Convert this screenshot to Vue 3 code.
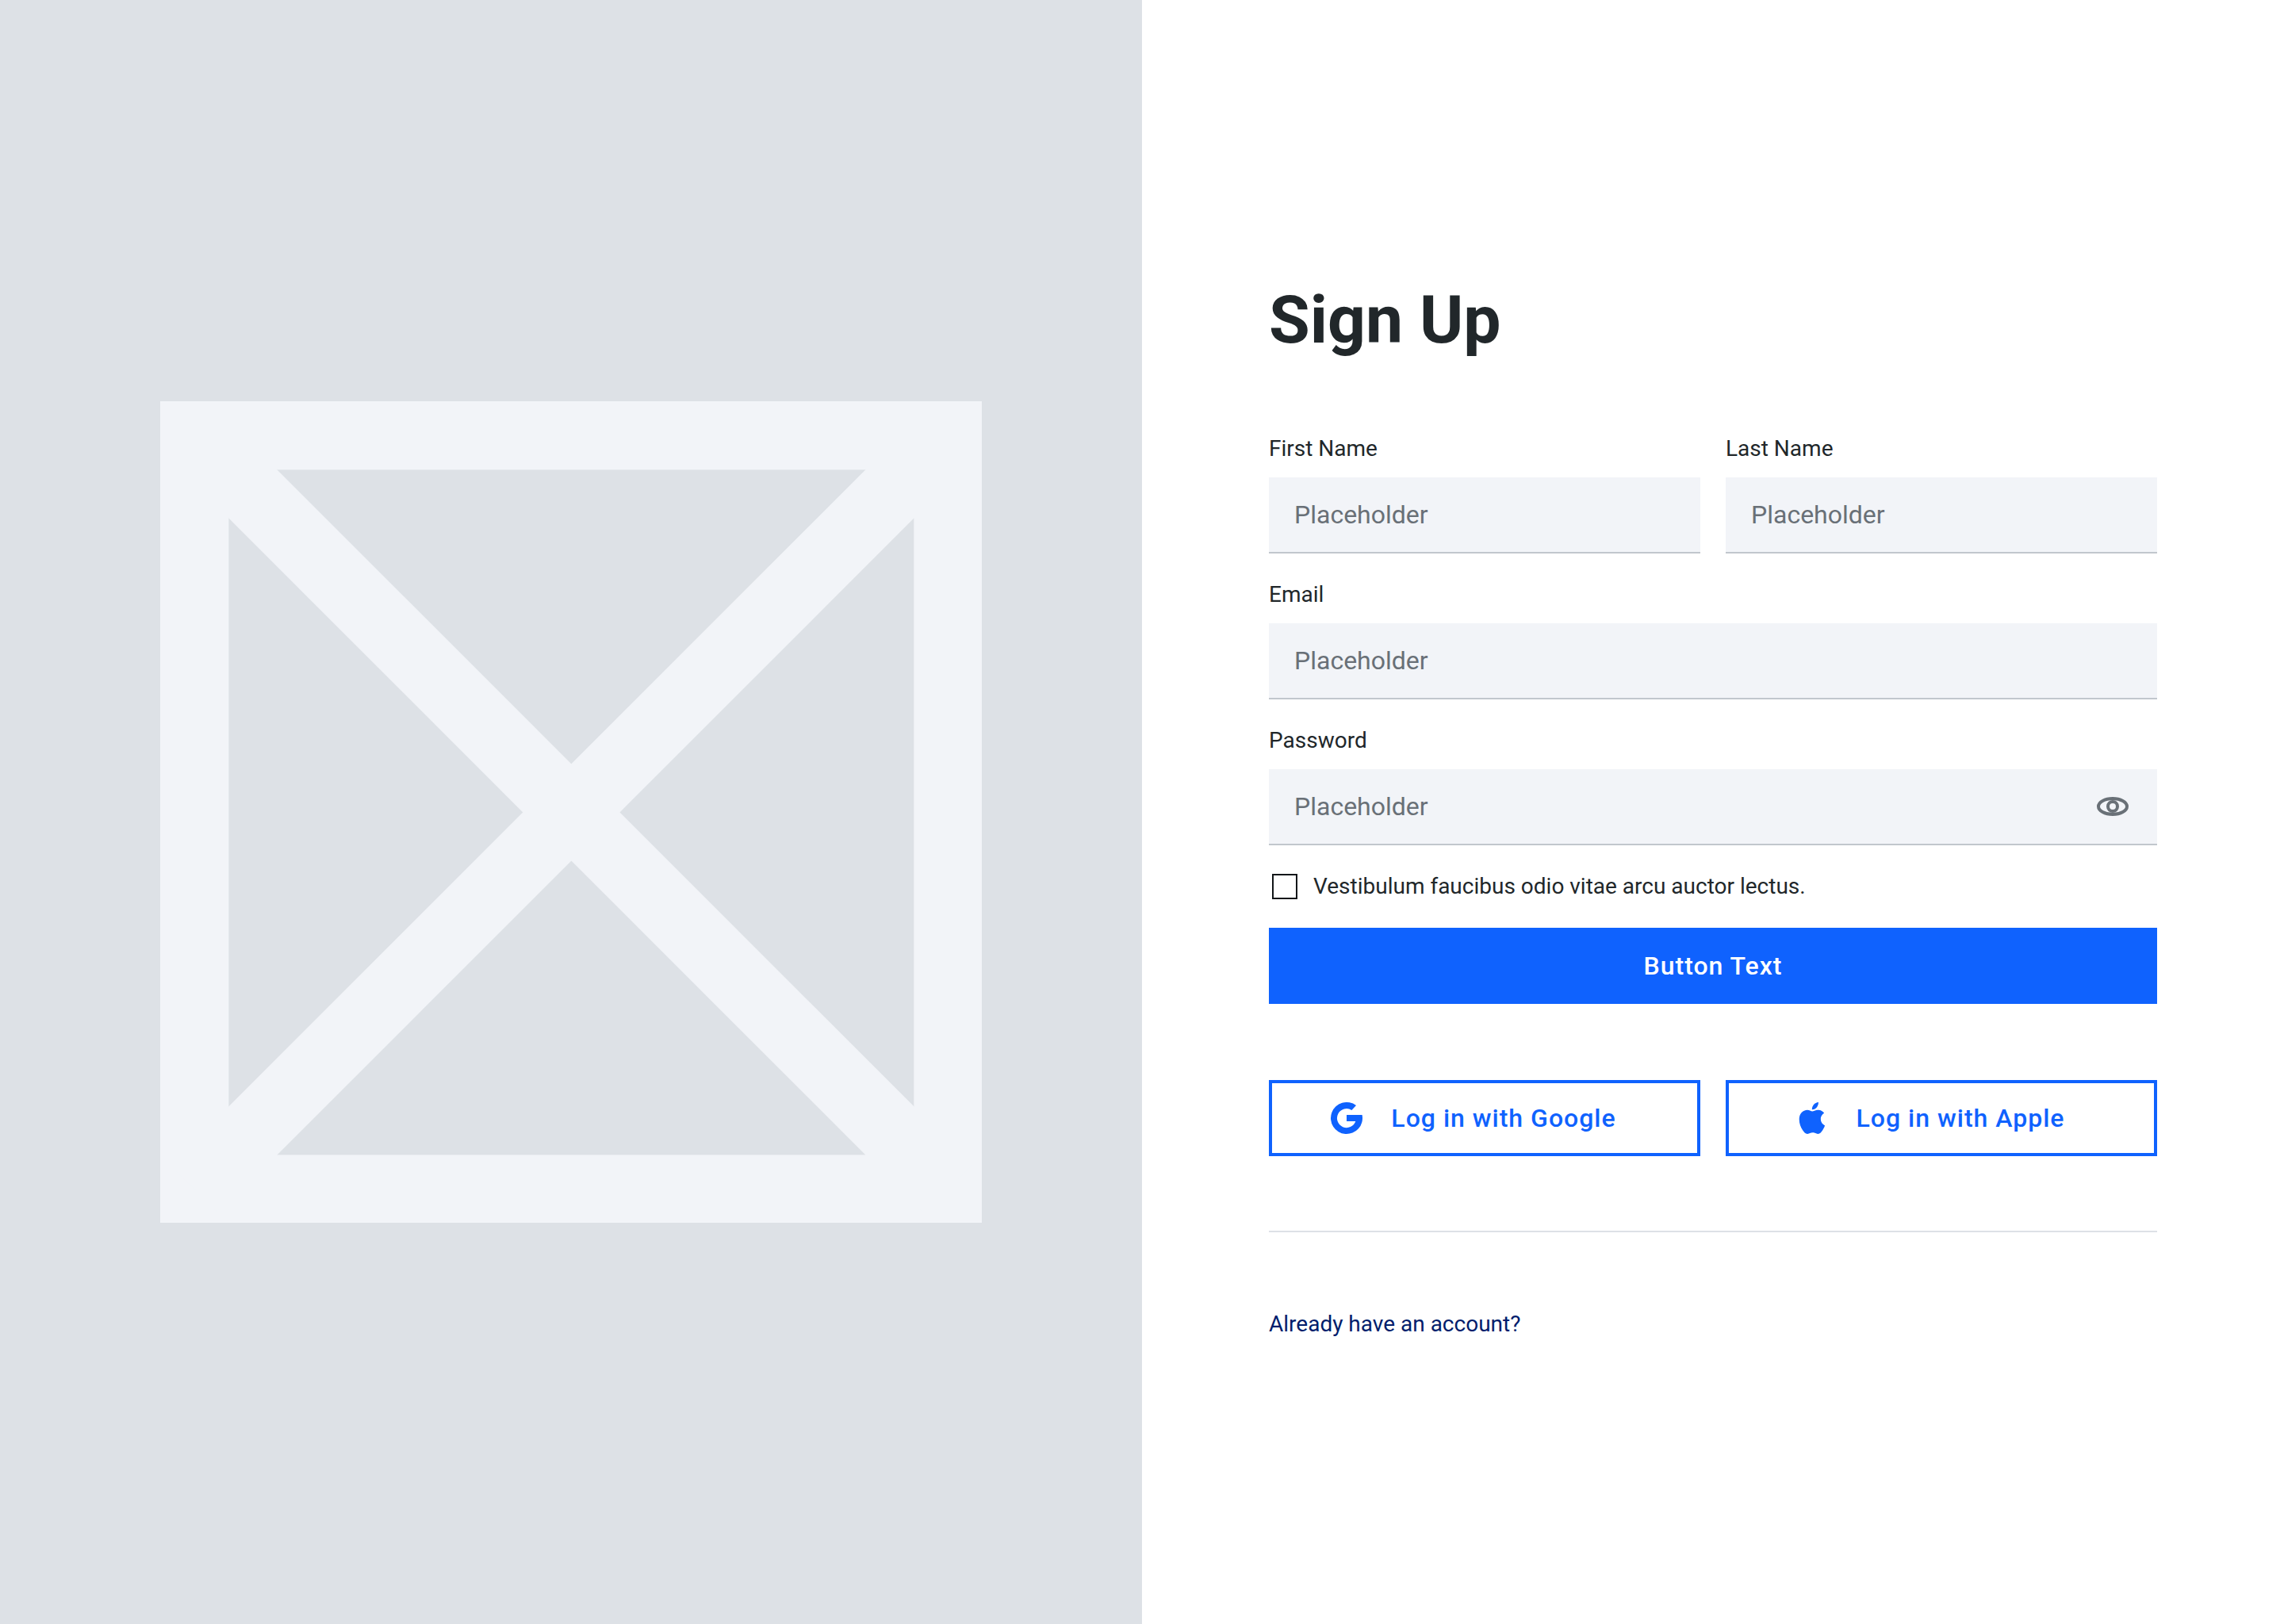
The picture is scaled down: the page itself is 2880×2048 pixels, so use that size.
<script setup>
import { ref } from 'vue'

const firstName = ref('')
const lastName = ref('')
const email = ref('')
const password = ref('')
const accepted = ref(false)
const passwordVisible = ref(false)
</script>

<template>
  <main class="page">
    <section class="media">
      <svg class="media-picture" viewBox="0 0 24 24" fill="none" stroke="currentColor" stroke-width="2" role="img" aria-label="Image placeholder">
        <rect x="1" y="1" width="22" height="22" />
        <path d="M1 1 23 23M23 1 1 23" />
      </svg>
    </section>

    <section class="panel">
      <h1 class="title">Sign Up</h1>

      <form class="form" @submit.prevent>
        <div class="row">
          <div class="field">
            <label for="first-name">First Name</label>
            <input id="first-name" v-model="firstName" class="input" type="text" placeholder="Placeholder" />
          </div>
          <div class="field">
            <label for="last-name">Last Name</label>
            <input id="last-name" v-model="lastName" class="input" type="text" placeholder="Placeholder" />
          </div>
        </div>

        <div class="field">
          <label for="email">Email</label>
          <input id="email" v-model="email" class="input" type="email" placeholder="Placeholder" />
        </div>

        <div class="field">
          <label for="password">Password</label>
          <div class="input input-group">
            <input
              id="password"
              v-model="password"
              class="bare"
              :type="passwordVisible ? 'text' : 'password'"
              placeholder="Placeholder"
            />
            <button class="reveal" type="button" aria-label="Show password" @click="passwordVisible = !passwordVisible">
              <svg class="icon" viewBox="0 0 24 24" fill="none" stroke="currentColor" stroke-width="2">
                <ellipse cx="12" cy="12" rx="9" ry="5" />
                <circle cx="12" cy="12" r="3" />
              </svg>
            </button>
          </div>
        </div>

        <div class="consent">
          <input id="consent" v-model="accepted" class="checkbox" type="checkbox" />
          <label for="consent">Vestibulum faucibus odio vitae arcu auctor lectus.</label>
        </div>

        <button class="button primary" type="submit">Button Text</button>
      </form>

      <div class="row">
        <button class="button outline" type="button">
          <svg class="icon" viewBox="0 0 24 24" fill="currentColor" aria-hidden="true">
            <path d="M18 4A10 10 0 1 0 21.8 10H12V14H17.66A6 6 0 1 1 15.2 7Z" />
          </svg>
          <span>Log in with Google</span>
        </button>
        <button class="button outline" type="button">
          <svg class="icon" viewBox="0 0 24 24" fill="currentColor" aria-hidden="true">
            <path d="M18.71 19.5C17.88 20.74 17 21.95 15.66 21.97C14.32 22 13.89 21.18 12.37 21.18C10.84 21.18 10.37 21.95 9.1 22C7.79 22.05 6.8 20.68 5.96 19.47C4.25 17 2.94 12.45 4.7 9.39C5.57 7.87 7.13 6.91 8.82 6.88C10.1 6.86 11.32 7.75 12.11 7.75C12.89 7.75 14.37 6.68 15.92 6.84C16.57 6.87 18.39 7.1 19.56 8.82C19.47 8.88 17.39 10.1 17.41 12.63C17.44 15.65 20.06 16.66 20.09 16.67C20.06 16.74 19.67 18.11 18.71 19.5M13 3.5C13.73 2.67 14.94 2.04 15.94 2C16.07 3.17 15.6 4.35 14.9 5.19C14.21 6.04 13.07 6.7 11.95 6.61C11.8 5.46 12.36 4.26 13 3.5Z" />
          </svg>
          <span>Log in with Apple</span>
        </button>
      </div>

      <hr class="divider" />

      <a class="link" href="#login">Already have an account?</a>
    </section>
  </main>
</template>

<style>
body {
  margin: 0;
  background: #ffffff;
}
</style>

<style scoped>
.page {
  display: grid;
  grid-template-columns: 1fr 1fr;
  min-height: 100vh;
  color: #21272a;
  font-family: Roboto, 'Liberation Sans', sans-serif;
  font-size: 28px;
  line-height: 40px;
}

.page *,
.page {
  box-sizing: border-box;
}

.media {
  display: flex;
  align-items: center;
  justify-content: center;
  background: #dde1e6;
}

.media-picture {
  display: block;
  width: 72%;
  color: #f2f4f8;
}

.panel {
  display: flex;
  flex-direction: column;
  justify-content: center;
  gap: 96px;
  padding: 96px 160px;
}

.title {
  margin: 0;
  font-size: 84px;
  font-weight: 700;
  line-height: 92px;
}

.form {
  display: flex;
  flex-direction: column;
  gap: 32px;
}

.row {
  display: grid;
  grid-template-columns: 1fr 1fr;
  gap: 32px;
}

.field {
  display: flex;
  flex-direction: column;
  gap: 16px;
}

.input {
  width: 100%;
  height: 96px;
  padding: 0 32px;
  border: 0;
  border-bottom: 2px solid #c1c7cd;
  border-radius: 0;
  background: #f2f4f8;
}

.input,
.bare {
  color: #21272a;
  font-family: inherit;
  font-size: 32px;
}

.input-group {
  display: flex;
  align-items: center;
  gap: 16px;
}

.bare {
  flex: 1;
  min-width: 0;
  padding: 0;
  border: 0;
  background: none;
}

.input::placeholder,
.bare::placeholder {
  color: #697077;
  opacity: 1;
}

.reveal {
  padding: 0;
  border: 0;
  background: none;
  color: #697077;
  cursor: pointer;
}

.icon {
  display: block;
  width: 48px;
  height: 48px;
}

.consent {
  display: flex;
  align-items: center;
  gap: 20px;
  padding-left: 4px;
}

.checkbox {
  width: 32px;
  height: 32px;
  margin: 0;
  border: 2px solid #121619;
  background: #ffffff;
  appearance: none;
}

.checkbox:checked {
  background: #0f62fe;
}

.button {
  display: flex;
  align-items: center;
  justify-content: center;
  height: 96px;
  padding: 0 24px;
  border: 4px solid #0f62fe;
  border-radius: 0;
  font-family: inherit;
  font-size: 32px;
  font-weight: 500;
  letter-spacing: 1px;
  cursor: pointer;
}

.button span {
  padding: 0 32px;
}

.primary {
  background: #0f62fe;
  color: #ffffff;
}

.outline {
  background: #ffffff;
  color: #0f62fe;
}

.divider {
  width: 100%;
  margin: -2px 0 0;
  border: 0;
  border-top: 2px solid #dde1e6;
}

.link {
  align-self: flex-start;
  color: #001d6c;
  text-decoration: none;
}
</style>
